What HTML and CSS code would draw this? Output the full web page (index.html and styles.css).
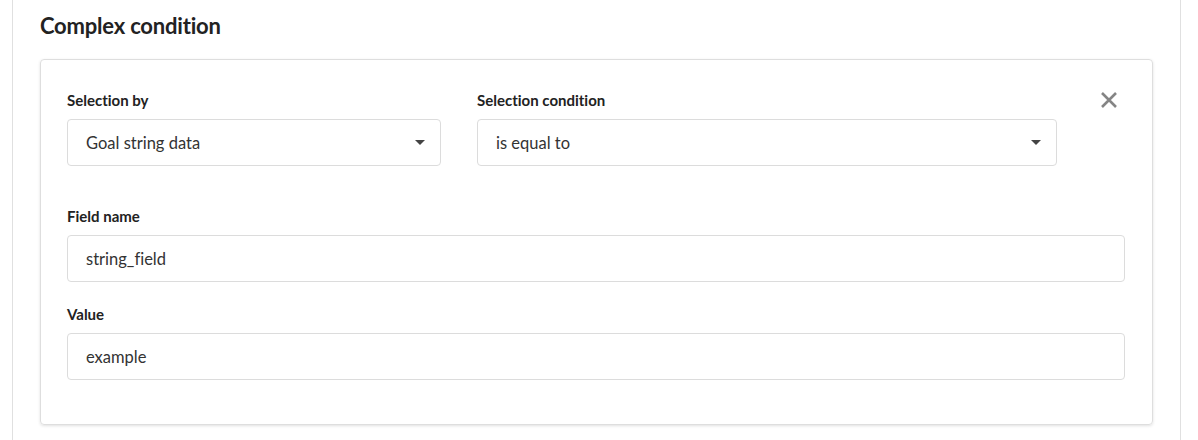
FILE: index.html
```html
<!DOCTYPE html>
<html>
<head>
<meta charset="utf-8">
<link rel="stylesheet" href="styles.css">
</head>
<body>
<div class="panel">
  <h2 class="title">Complex condition</h2>
  <div class="card">
    <div class="row-top">
      <div class="field">
        <label class="label">Selection by</label>
        <div class="box select"><span>Goal string data</span><span class="caret"></span></div>
      </div>
      <div class="field">
        <label class="label">Selection condition</label>
        <div class="box select"><span>is equal to</span><span class="caret"></span></div>
      </div>
      <div class="close">
        <svg width="18" height="18" viewBox="0 0 18 18"><path d="M2 2 L16 16 M16 2 L2 16" stroke="#858585" stroke-width="2.6" stroke-linecap="butt"/></svg>
      </div>
    </div>
    <div class="field wide">
      <label class="label">Field name</label>
      <div class="box">string_field</div>
    </div>
    <div class="field wide">
      <label class="label">Value</label>
      <div class="box">example</div>
    </div>
  </div>
</div>
</body>
</html>
```
FILE: styles.css
```css
html, body {
  margin: 0;
  padding: 0;
  background: #fff;
}
body {
  font-family: Lato, "Noto Sans", sans-serif;
  font-variant-ligatures: none;
  color: #222;
}
.panel {
  margin: 0 17px 0 12px;
  border-left: 1px solid #e0e0e0;
  border-right: 1px solid #e0e0e0;
  padding: 12px 27px 40px 27px;
  height: 500px;
  box-sizing: border-box;
}
.title {
  margin: 0 0 19px 0;
  font-size: 22px;
  line-height: 28px;
  font-weight: 700;
  letter-spacing: -0.2px;
  color: #222;
}
.card {
  border: 1px solid #dedede;
  border-radius: 4px;
  box-shadow: 0 1px 3px rgba(0,0,0,0.12);
  padding: 30px 27px 44px 26px;
  display: flex;
  flex-direction: column;
  gap: 40px;
}
.row-top {
  display: grid;
  grid-template-columns: 374px 580px 1fr;
  column-gap: 36px;
}
.field {
  display: flex;
  flex-direction: column;
}
.wide + .wide {
  margin-top: -18px;
}
.label {
  font-size: 15px;
  line-height: 20px;
  font-weight: 700;
  color: #222;
  margin-bottom: 9px;
}
.box {
  height: 47px;
  box-sizing: border-box;
  border: 1px solid #dcdcdc;
  border-radius: 4px;
  padding: 0 18px;
  display: flex;
  align-items: center;
  font-size: 16.5px;
  color: #333;
}
.select {
  justify-content: space-between;
  padding-right: 15px;
}
.caret {
  width: 0;
  height: 0;
  border-left: 5px solid transparent;
  border-right: 5px solid transparent;
  border-top: 5px solid #444;
}
.close {
  display: flex;
  justify-content: center;
  padding-top: 1px;
}
```
